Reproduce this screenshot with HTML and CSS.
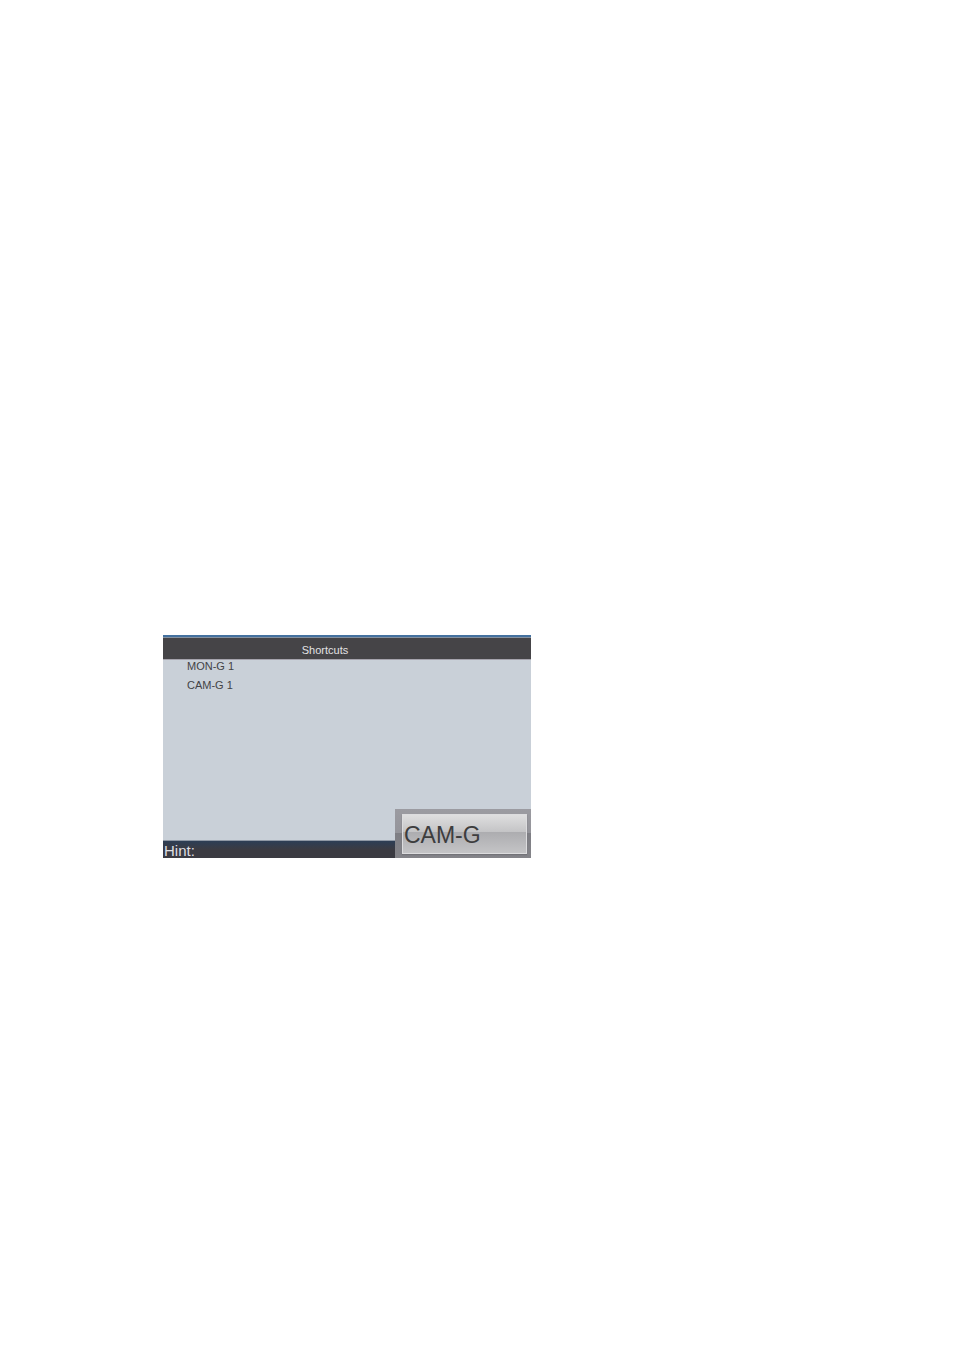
FILE: index.html
```html
<!DOCTYPE html>
<html lang="en">

<head>
    <meta charset="UTF-8">
    <meta name="viewport" content="width=device-width, initial-scale=1.0">
    <title>Shortcuts</title>
    <link rel="stylesheet" href="styles.css">
</head>

<body>
    <main class="screen">
        <h1 class="title">Shortcuts</h1>

        <ul class="shortcuts">
            <li>MON-G 1</li>
            <li>CAM-G 1</li>
        </ul>

        <footer class="hint">Hint:</footer>

        <!-- Softkey over the bottom right corner -->
        <div class="softkey">
            <button type="button">CAM-G</button>
        </div>
    </main>
</body>

</html>
```

FILE: styles.css
```css
* {
    box-sizing: border-box;
}

body {
    margin: 0;
    padding: 635px 16px 16px 163px;
    background-color: #ffffff;
    font-family: "Liberation Sans", Arial, sans-serif;
}

.screen {
    position: relative;
    display: flex;
    flex-direction: column;
    max-width: 368px;
    background-color: #c9d0d8;
}

.title {
    margin: 0;
    padding: 5px 44px 0 0;
    border-top: 2px solid #44719f;
    background-color: #454447;
    box-shadow: inset 0 1px #8592a1;
    color: #e2e2e4;
    font-size: 11px;
    font-weight: normal;
    line-height: 17px;
    text-align: center;
}

.shortcuts {
    display: flex;
    flex-direction: column;
    gap: 7px;
    min-height: 181px;
    margin: 0;
    padding: 0 24px;
    border-top: 1px solid #a5a3ac;
    color: #434346;
    font-size: 11px;
    line-height: 12px;
    list-style: none;
}

.hint {
    padding: 1px 1px 0;
    border-top: 1px solid #8f98a4;
    background: linear-gradient(to bottom, #2d3e55, #3b3b42 50%);
    color: #dedfe2;
    font-size: 15px;
    line-height: 17px;
    height: 18px;
}

.softkey {
    position: absolute;
    right: 0;
    bottom: 0;
    width: 136px;
    height: 49px;
    padding: 5px 4px 4px 7px;
    background: linear-gradient(to bottom, #9b9ba1, #94949a 48%, #7e7e84 48%, #848489);
}

.softkey button {
    display: block;
    width: 100%;
    height: 100%;
    padding: 1px 0 0 1px;
    border: 1px solid #dcdcde;
    background: linear-gradient(to bottom, #dededf, #c3c3c5 46%, #adadb0 46%, #c4c4c6);
    box-shadow: 0 1px 1px #737378;
    color: #3d3d3e;
    font-family: inherit;
    font-size: 23px;
    line-height: 36px;
    text-align: left;
    cursor: pointer;
}
```
